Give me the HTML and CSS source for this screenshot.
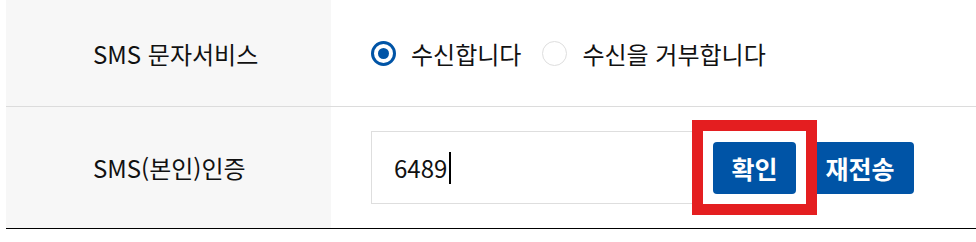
FILE: index.html
```html
<!DOCTYPE html>
<html lang="ko">
<head>
<meta charset="utf-8">
<link rel="stylesheet" href="styles.css">
</head>
<body>
<div class="form">
  <div class="row row-sms">
    <div class="label">SMS 문자서비스</div>
    <div class="field">
      <label class="radio"><span class="dot checked"></span><span class="rtext">수신합니다</span></label>
      <label class="radio"><span class="dot"></span><span class="rtext">수신을 거부합니다</span></label>
    </div>
  </div>
  <div class="row row-auth">
    <div class="label">SMS(본인)인증</div>
    <div class="field">
      <div class="input"><span class="val">6489</span><span class="caret"></span></div>
      <div class="btnwrap">
        <button class="btn">확인</button>
        <span class="highlight"></span>
      </div>
      <button class="btn btn-resend">재전송</button>
    </div>
  </div>
</div>
</body>
</html>
```
FILE: styles.css
```css
html, body {
  margin: 0;
  padding: 0;
  background: #fff;
}
body {
  font-family: "Noto Sans CJK KR", "Noto Sans", sans-serif;
  color: #111;
}
.form {
  margin-left: 6px;
  border-bottom: 1px solid #000;
}
.row {
  display: grid;
  grid-template-columns: 325px 1fr;
}
.row-sms {
  height: 106px;
  border-bottom: 1px solid #dcdcdc;
}
.row-auth {
  height: 121px;
}
.label {
  background: #f7f7f7;
  padding-left: 87px;
  display: flex;
  align-items: center;
  font-size: 24px;
  letter-spacing: 0;
}
.field {
  padding-left: 40px;
  display: flex;
  align-items: center;
}
.radio {
  display: flex;
  align-items: center;
  font-size: 24px;
  margin-right: 21px;
}
.dot {
  box-sizing: border-box;
  width: 25px;
  height: 25px;
  border-radius: 50%;
  border: 1px solid #dedede;
  background: #fff;
  margin-right: 15px;
  position: relative;
}
.dot.checked {
  border: 3px solid #0054a6;
}
.dot.checked::after {
  content: "";
  position: absolute;
  left: 4px;
  top: 4px;
  width: 11px;
  height: 11px;
  border-radius: 50%;
  background: #0054a6;
}
.input {
  box-sizing: border-box;
  width: 326px;
  height: 73px;
  border: 1px solid #dedede;
  padding-left: 22px;
  display: flex;
  align-items: center;
  font-size: 24px;
  margin-right: 16px;
}
.caret {
  display: inline-block;
  width: 2px;
  height: 32px;
  background: #000;
  margin-left: 2px;
}
.btnwrap {
  position: relative;
  margin-right: 10px;
}
.btn {
  height: 52px;
  border: 0;
  border-radius: 4px;
  background: #0054a6;
  color: #fff;
  font-family: "Noto Sans CJK KR", "Noto Sans", sans-serif;
  font-weight: 700;
  font-size: 25px;
  padding: 0;
  width: 83px;
  display: block;
}
.btn-resend {
  width: 108px;
}
.highlight {
  position: absolute;
  left: -21px;
  top: -22px;
  width: 125px;
  height: 95px;
  box-sizing: border-box;
  border: 11px solid #e41e20;
  z-index: 2;
}
```
